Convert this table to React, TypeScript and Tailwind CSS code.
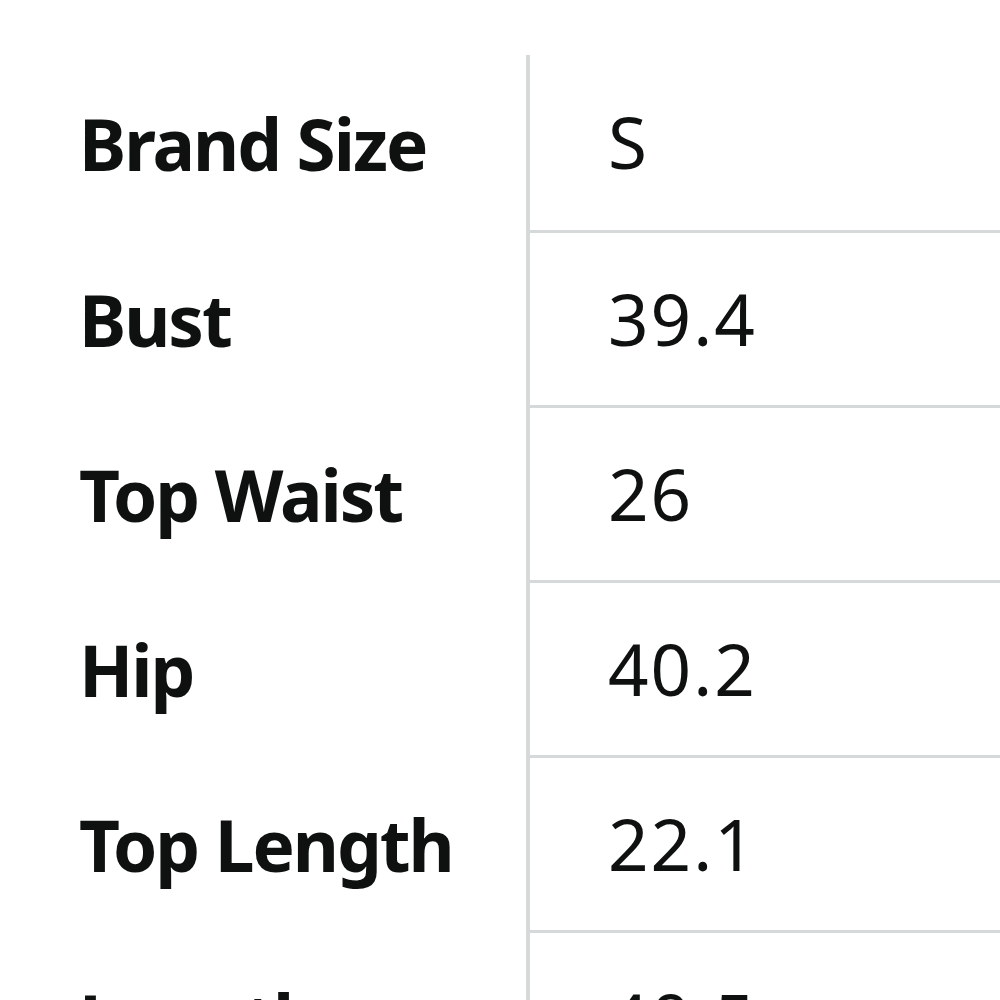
import React from "react";

const rows: [string, string][] = [
  ["Brand Size", "S"],
  ["Bust", "39.4"],
  ["Top Waist", "26"],
  ["Hip", "40.2"],
  ["Top Length", "22.1"],
  ["Length", "40.5"],
];

export default function App() {
  return (
    <div
      className="w-[1000px] h-[1000px] overflow-hidden bg-white pt-[55px] text-[#0f1111]"
      style={{ fontFamily: '"Noto Sans", "Open Sans", sans-serif' }}
    >
      {rows.map(([k, v], i) => (
        <div
          key={k}
          className={
            i === 0
              ? "grid grid-cols-[526px_1fr] h-[178px]"
              : "grid grid-cols-[526px_1fr] h-[175px]"
          }
        >
          <div className="flex items-center pl-[79px] text-[71px] font-bold tracking-[-2px]">
            {k}
          </div>
          <div className="flex items-center border-l-4 border-b-[3px] border-[#d5d9d9] pl-[78px] text-[71px] tracking-[2px]">
            {v}
          </div>
        </div>
      ))}
    </div>
  );
}
